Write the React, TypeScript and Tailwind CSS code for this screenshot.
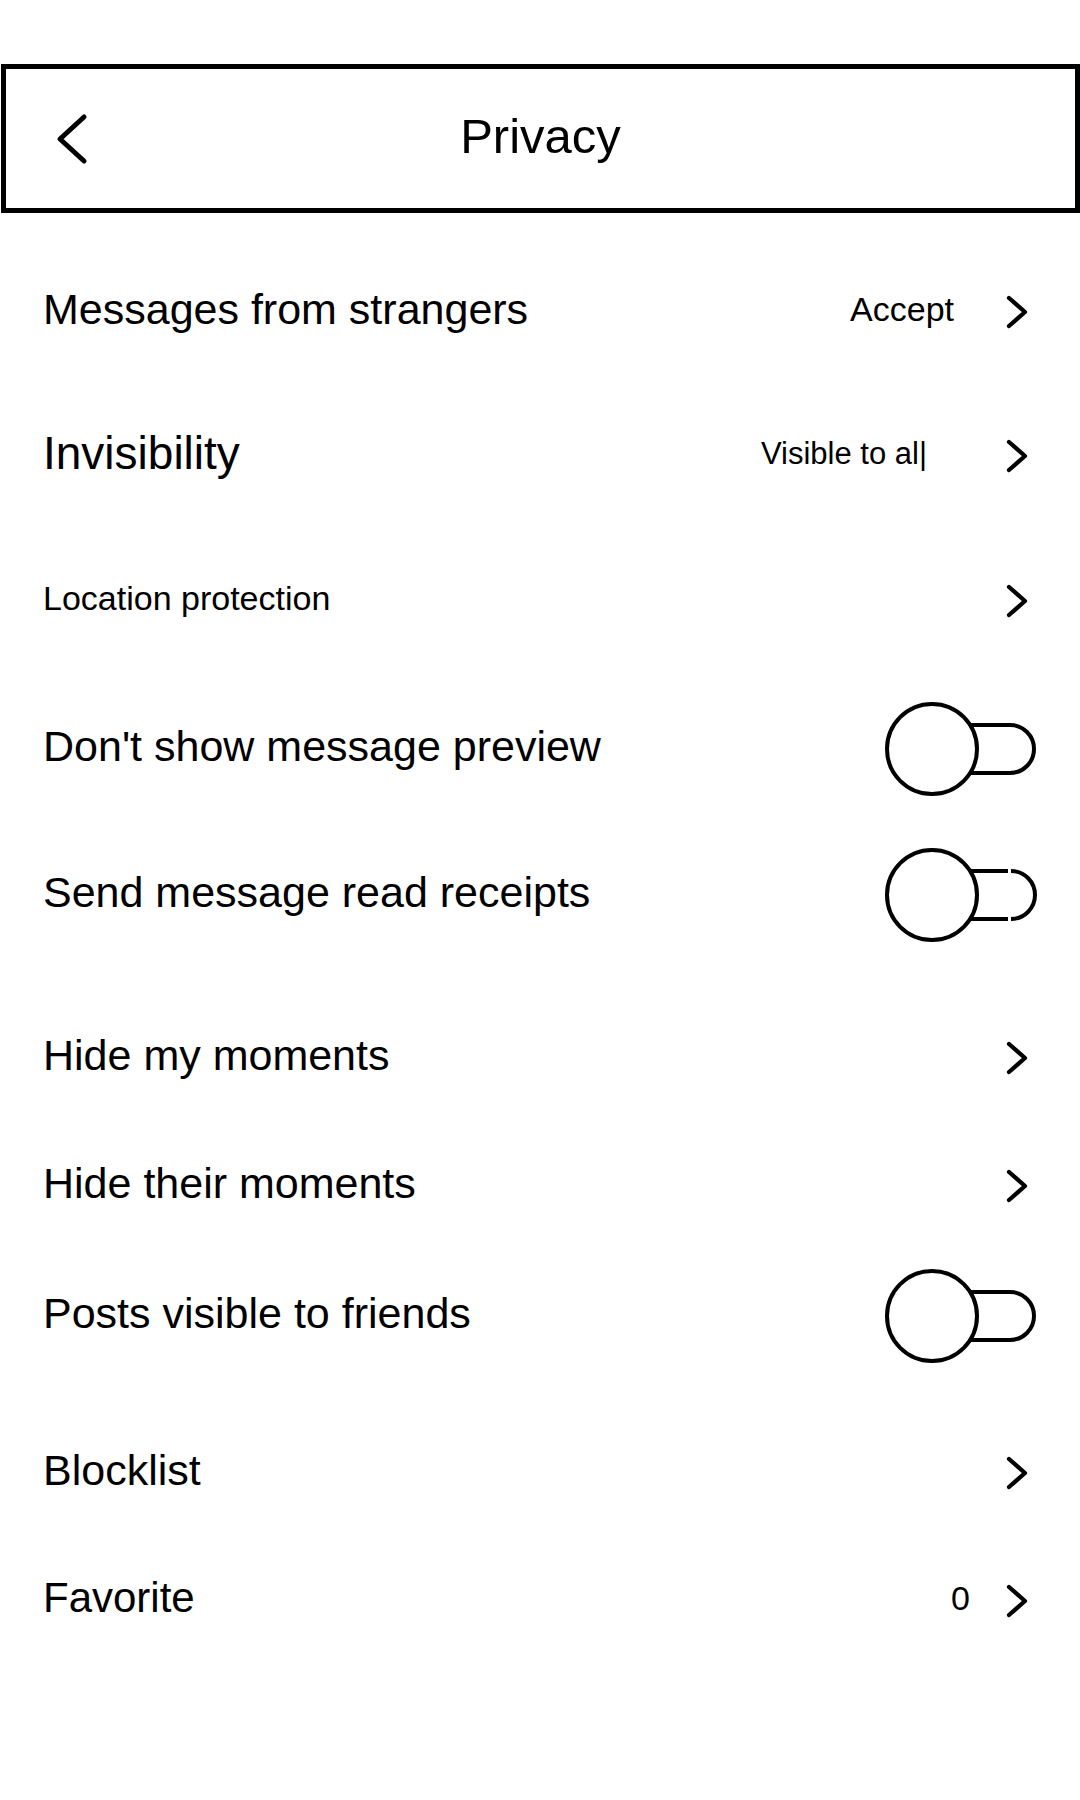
import React from 'react';

type Row = {
  label: string;
  labelClass: string;
  gapClass: string;
  value?: string;
  valueClass?: string;
  kind: 'link' | 'toggle';
  split?: boolean;
};

const rows: Row[] = [
  { label: 'Messages from strangers', labelClass: 'text-[43px]', gapClass: 'mt-[46px]', value: 'Accept', valueClass: 'text-[34px] mr-[52px]', kind: 'link' },
  { label: 'Invisibility', labelClass: 'text-[46px]', gapClass: 'mt-[44px]', value: 'Visible to al|', valueClass: 'text-[31px] mr-[79px]', kind: 'link' },
  { label: 'Location protection', labelClass: 'text-[34px]', gapClass: 'mt-[45px]', kind: 'link' },
  { label: "Don't show message preview", labelClass: 'text-[43px]', gapClass: 'mt-[48px]', kind: 'toggle' },
  { label: 'Send message read receipts', labelClass: 'text-[43px]', gapClass: 'mt-[46px]', kind: 'toggle', split: true },
  { label: 'Hide my moments', labelClass: 'text-[43px]', gapClass: 'mt-[63px]', kind: 'link' },
  { label: 'Hide their moments', labelClass: 'text-[43px]', gapClass: 'mt-[28px]', kind: 'link' },
  { label: 'Posts visible to friends', labelClass: 'text-[43px]', gapClass: 'mt-[30px]', kind: 'toggle' },
  { label: 'Blocklist', labelClass: 'text-[43px]', gapClass: 'mt-[57px]', kind: 'link' },
  { label: 'Favorite', labelClass: 'text-[42px]', gapClass: 'mt-[28px]', value: '0', valueClass: 'text-[34px] mr-[36px]', kind: 'link' },
];

function Chevron() {
  return (
    <svg width="22" height="34" viewBox="0 0 22 34" className="mr-[52px] mt-[6px] shrink-0">
      <path d="M3 3 L19 17 L3 31" fill="none" stroke="#000" strokeWidth="4.2" strokeLinecap="round" strokeLinejoin="round" />
    </svg>
  );
}

function Toggle({ split }: { split?: boolean }) {
  return (
    <svg width="156" height="96" viewBox="0 0 156 96" className="mr-[40px] mt-[6px] shrink-0">
      {split ? (
        <>
          <path d="M86 24 H124 M86 72 H124" fill="none" stroke="#000" strokeWidth="4" />
          <path d="M127 24 A24 24 0 0 1 127 72" fill="none" stroke="#000" strokeWidth="4" />
        </>
      ) : (
        <path d="M86 24 H126 A24 24 0 0 1 126 72 H86" fill="none" stroke="#000" strokeWidth="4" />
      )}
      <circle cx="48" cy="48" r="45" fill="#fff" stroke="#000" strokeWidth="4" />
    </svg>
  );
}

export default function App() {
  return (
    <div className="w-[1080px] h-[1800px] bg-white text-black font-['Liberation_Sans',Arial,sans-serif] overflow-hidden">
      {/* Top bar */}
      <header className="mt-[64px] ml-[1px] w-[1079px] h-[149px] border-[5px] border-black grid grid-cols-[1fr_auto_1fr] items-center">
        <div className="pl-[49px] flex items-center">
          <svg width="34" height="52" viewBox="0 0 34 52">
            <path d="M29 4 L5 26 L29 48" fill="none" stroke="#000" strokeWidth="5" strokeLinecap="round" strokeLinejoin="round" />
          </svg>
        </div>
        <h1 className="text-[49px] leading-none pb-[4px]">Privacy</h1>
        <div />
      </header>

      {/* Settings list */}
      <div className="flex flex-col">
        {rows.map((row) => (
          <div key={row.label} className={`${row.gapClass} h-[100px] pl-[43px] flex items-center`}>
            <span className={`${row.labelClass} leading-none`}>{row.label}</span>
            <div className="ml-auto flex items-center">
              {row.value && <span className={`${row.valueClass} leading-none`}>{row.value}</span>}
              {row.kind === 'link' ? <Chevron /> : <Toggle split={row.split} />}
            </div>
          </div>
        ))}
      </div>
    </div>
  );
}
